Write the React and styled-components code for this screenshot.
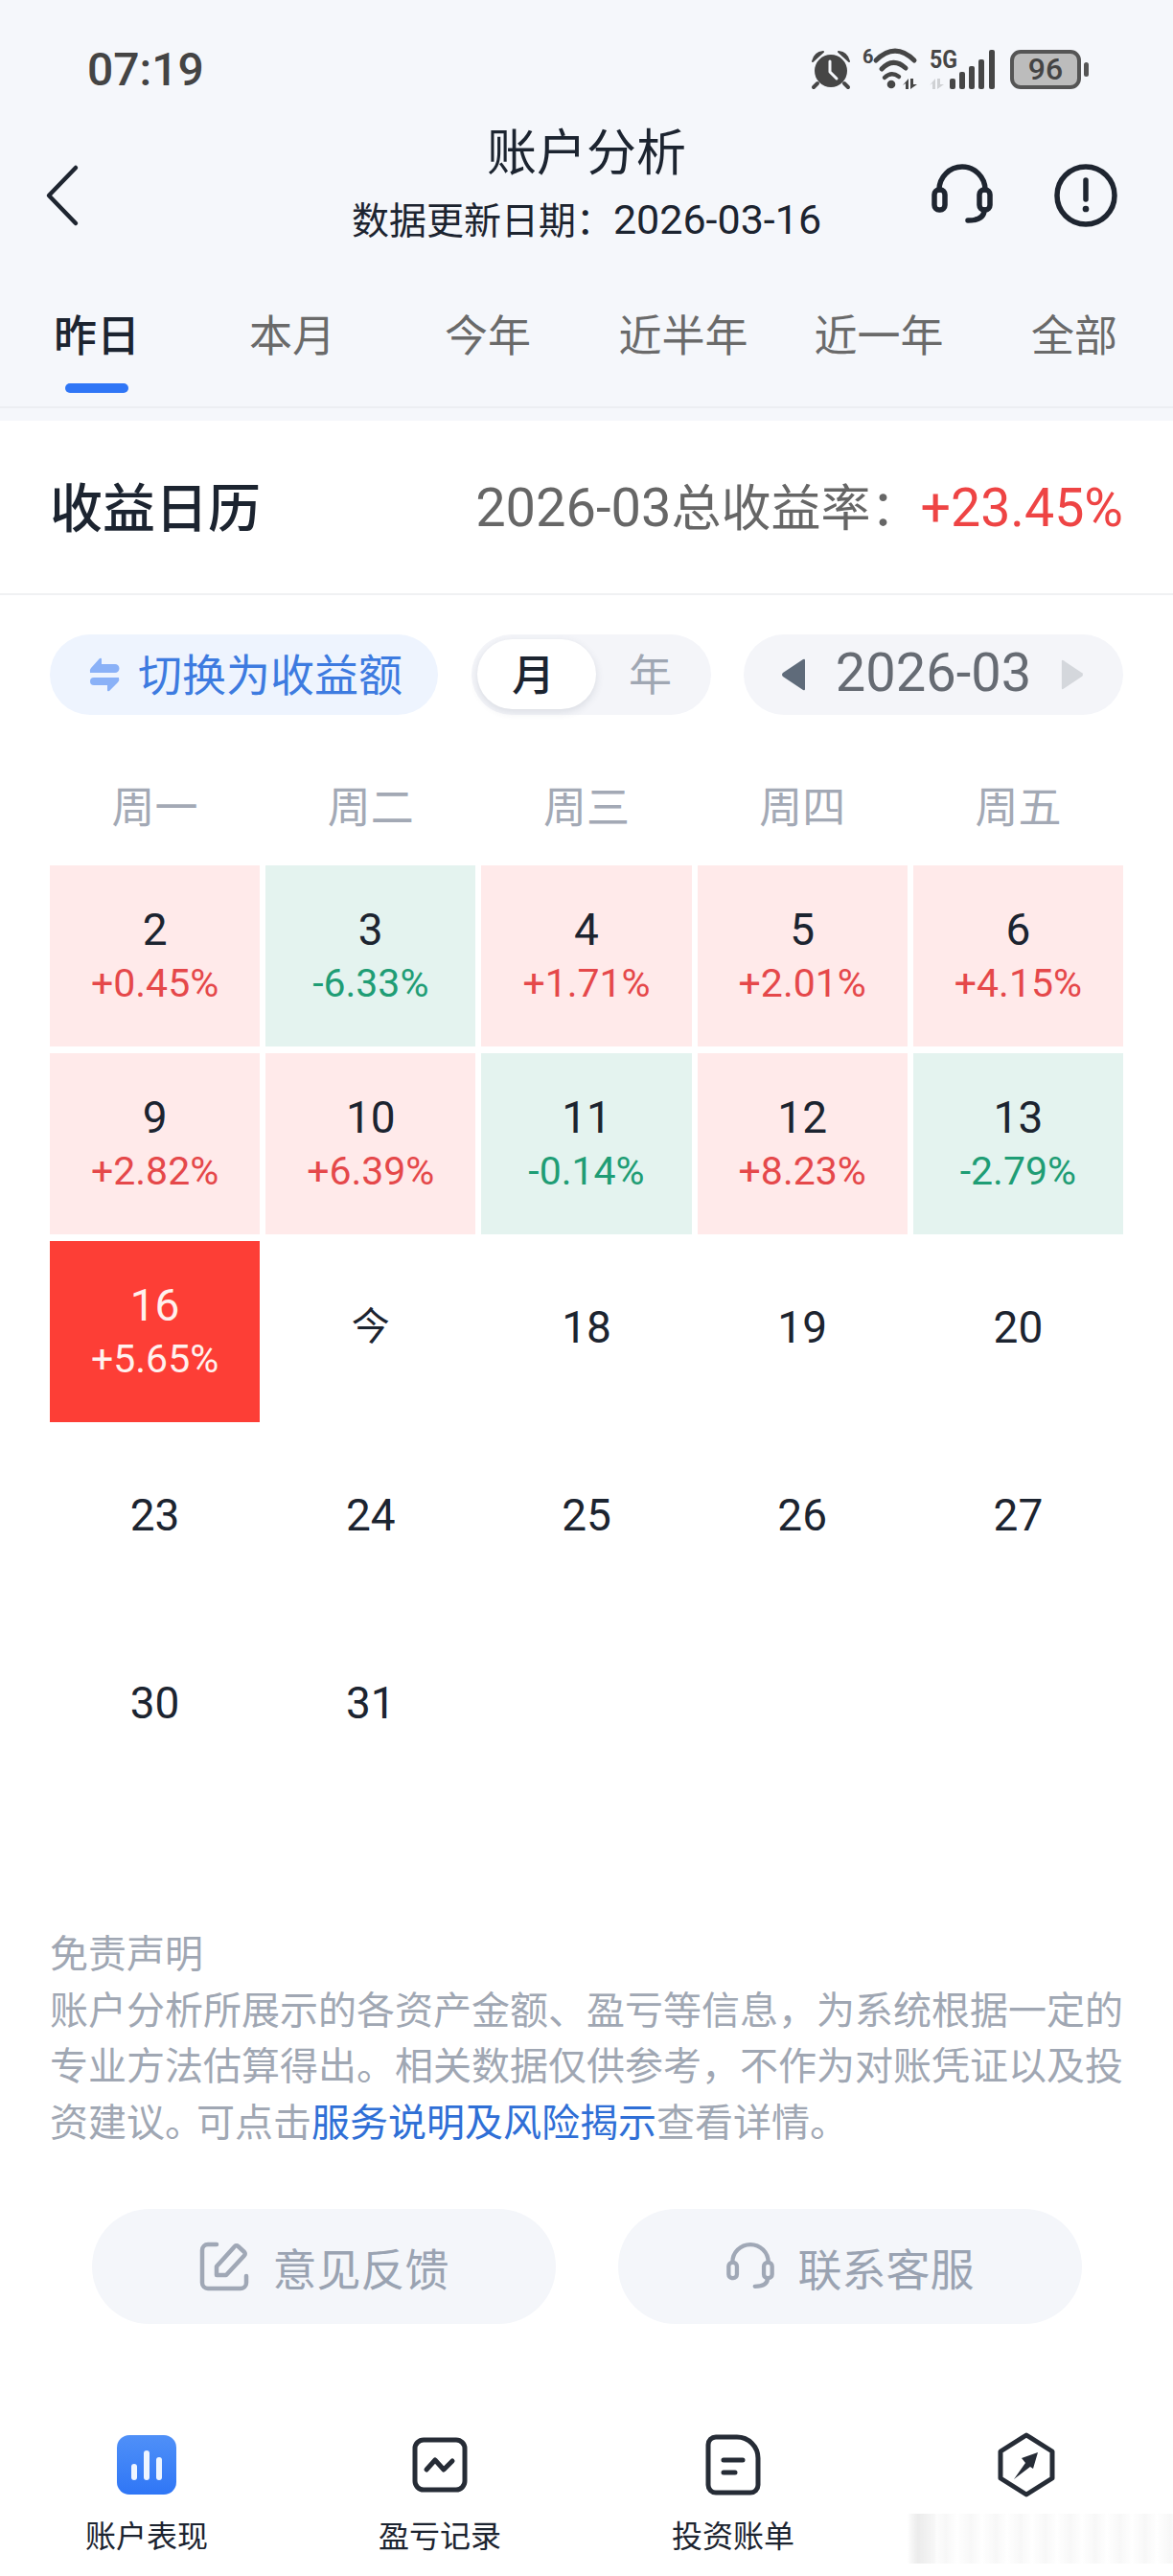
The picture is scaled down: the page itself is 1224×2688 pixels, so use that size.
import React from 'react';
import styled, { createGlobalStyle } from 'styled-components';

const GlobalStyle = createGlobalStyle`
  html, body {
    margin: 0;
    padding: 0;
    background: #fff;
  }
  body {
    font-family: Roboto, "Noto Sans CJK SC", sans-serif;
    color: #1c2430;
  }
  * {
    box-sizing: border-box;
  }
  svg {
    overflow: visible;
    flex-shrink: 0;
  }
`;

const TABS = ['昨日', '本月', '今年', '近半年', '近一年', '全部'];
const WEEKDAYS = ['周一', '周二', '周三', '周四', '周五'];

const DAYS = [
  { day: '2', pct: '+0.45%', tone: 'up' },
  { day: '3', pct: '-6.33%', tone: 'down' },
  { day: '4', pct: '+1.71%', tone: 'up' },
  { day: '5', pct: '+2.01%', tone: 'up' },
  { day: '6', pct: '+4.15%', tone: 'up' },
  { day: '9', pct: '+2.82%', tone: 'up' },
  { day: '10', pct: '+6.39%', tone: 'up' },
  { day: '11', pct: '-0.14%', tone: 'down' },
  { day: '12', pct: '+8.23%', tone: 'up' },
  { day: '13', pct: '-2.79%', tone: 'down' },
  { day: '16', pct: '+5.65%', tone: 'hot' },
  { day: '今' },
  { day: '18' },
  { day: '19' },
  { day: '20' },
  { day: '23' },
  { day: '24' },
  { day: '25' },
  { day: '26' },
  { day: '27' },
  { day: '30' },
  { day: '31' },
];

const CELL_BG = { up: '#ffeaea', down: '#e4f3ef', hot: '#fd3e36' };
const PCT_COLOR = { up: '#e5484a', down: '#1f9d75', hot: '#fff1ee' };

const HeadsetIcon = ({ size, color, stroke }) => (
  <svg width={size} height={size * 0.94} viewBox="0 0 64 60" fill="none" stroke={color} strokeWidth={stroke} strokeLinecap="round" strokeLinejoin="round">
    <path d="M8 24 a24 24 0 0 1 48 0" />
    <rect x="3" y="24" width="11" height="21" rx="5" />
    <rect x="50" y="24" width="11" height="21" rx="5" />
    <path d="M55 45 Q55 56 38 56" />
  </svg>
);

const App = () => (
  <Page>
    <GlobalStyle />
    <Header>
      <StatusBar>
        <Clock>07:19</Clock>
        <StatusIcons>
          <svg width="42" height="42" viewBox="0 0 42 42" fill="#464646">
            <circle cx="21" cy="23" r="17" />
            <path d="M2 13 Q4 4 13 3 Z M40 13 Q38 4 29 3 Z" stroke="#464646" strokeWidth="2" strokeLinejoin="round" />
            <path d="M7 36 L3 40 M35 36 L39 40" stroke="#464646" strokeWidth="4" strokeLinecap="round" />
            <path d="M20 13 V24 L27 31" fill="none" stroke="#f5f7fb" strokeWidth="3" strokeLinecap="round" strokeLinejoin="round" />
          </svg>
          <svg width="60" height="45" viewBox="0 0 60 45" fill="none">
            <text x="1" y="16" fontFamily="Roboto" fontWeight="700" fontSize="20" fill="#464646">6</text>
            <path d="M15 13 Q35 -7 55 13" stroke="#464646" strokeWidth="5" strokeLinecap="round" />
            <path d="M21 22 Q33 9 46 21" stroke="#464646" strokeWidth="5" strokeLinecap="round" />
            <path d="M24 31 Q31 24 39 30" stroke="#464646" strokeWidth="4.5" strokeLinecap="round" />
            <circle cx="31" cy="38" r="4.3" fill="#464646" />
            <path d="M49 32 V43 H46 V37 L43 39 Z M51 32 V43 L58 38 H54 V32 Z" fill="#464646" />
          </svg>
          <svg width="70" height="45" viewBox="0 0 70 45" fill="#464646">
            <text x="0" y="21" fontFamily="Roboto" fontWeight="700" fontSize="26" textLength="29" lengthAdjust="spacingAndGlyphs">5G</text>
            <path d="M6 32 V43 H3 V37 L0 39 Z M8 32 V43 L15 38 H11 V32 Z" fill="#cfd1d4" />
            <rect x="21" y="32" width="6" height="11" rx="2" />
            <rect x="31" y="25" width="6" height="18" rx="2" />
            <rect x="41" y="19" width="6" height="24" rx="2" />
            <rect x="51" y="12" width="6" height="31" rx="2" />
            <rect x="62" y="2" width="6" height="41" rx="2" />
          </svg>
          <Battery>
            <BatteryBody>96</BatteryBody>
            <BatteryNub />
          </Battery>
        </StatusIcons>
      </StatusBar>

      <NavBar>
        <BackIcon width="36" height="66" viewBox="0 0 36 66" fill="none" stroke="#1e2530" strokeWidth="4.5" strokeLinecap="round" strokeLinejoin="round">
          <path d="M32 4 L4 33 L32 62" />
        </BackIcon>
        <NavTitle>
          <TitleText>账户分析</TitleText>
          <SubText>
            数据更新日期：<SubDate>2026-03-16</SubDate>
          </SubText>
        </NavTitle>
        <NavActions>
          <HeadsetIcon size={64} color="#1e2530" stroke={5.5} />
          <svg width="66" height="66" viewBox="0 0 66 66" fill="none" stroke="#1e2530" strokeWidth="5.5" strokeLinecap="round">
            <circle cx="33" cy="33" r="30" />
            <path d="M33 17 V37" />
            <circle cx="33" cy="47" r="1.6" fill="#1e2530" strokeWidth="3.5" />
          </svg>
        </NavActions>
      </NavBar>

      <TabRow>
        {TABS.map((tab, i) => (
          <Tab key={tab}>
            <TabLabel $active={i === 0}>{tab}</TabLabel>
            {i === 0 && <TabIndicator />}
          </Tab>
        ))}
      </TabRow>
    </Header>

    <SummaryRow>
      <SummaryTitle>收益日历</SummaryTitle>
      <SummaryValue>
        <SummaryNumber>2026-03</SummaryNumber>总收益率：<SummaryRate>+23.45%</SummaryRate>
      </SummaryValue>
    </SummaryRow>

    <Controls>
      <SwitchPill>
        <svg width="32" height="36" viewBox="0 0 32 36" fill="#8ab1f7">
          <path d="M1 16 Q0 13 2 11 L11 1 Q13 0 13 2 V7 H27 a4.5 4.5 0 0 1 0 9 Z" />
          <path d="M31 21 Q32 24 30 26 L21 35 Q19 36 19 34 V29 H5 a4 4 0 0 1 0 -8 Z" />
        </svg>
        <PillText>切换为收益额</PillText>
      </SwitchPill>
      <Segment>
        <SegmentItem $active>月</SegmentItem>
        <SegmentItem>年</SegmentItem>
      </Segment>
      <DatePicker>
        <svg width="28" height="34" viewBox="0 0 28 34" fill="#5f6b7a">
          <path d="M26 2 V32 Q26 34 24 33 L3 19 Q1 17 3 15 L24 1 Q26 0 26 2 Z" />
        </svg>
        <DateText>2026-03</DateText>
        <svg width="26" height="34" viewBox="0 0 28 34" fill="#d4d7dc">
          <path d="M2 2 V32 Q2 34 4 33 L25 19 Q27 17 25 15 L4 1 Q2 0 2 2 Z" />
        </svg>
      </DatePicker>
    </Controls>

    <WeekRow>
      {WEEKDAYS.map((w) => (
        <Weekday key={w}>{w}</Weekday>
      ))}
    </WeekRow>

    <CalendarGrid>
      {DAYS.map(({ day, pct, tone }) => (
        <DayCell key={day} $tone={tone}>
          <DayNumber $tone={tone} $small={day === '今'}>{day}</DayNumber>
          {pct && <DayPct $tone={tone}>{pct}</DayPct>}
        </DayCell>
      ))}
    </CalendarGrid>

    <Disclaimer>
      <DisclaimerLine>免责声明</DisclaimerLine>
      <DisclaimerLine>账户分析所展示的各资产金额、盈亏等信息，为系统根据一定的</DisclaimerLine>
      <DisclaimerLine>专业方法估算得出。相关数据仅供参考，不作为对账凭证以及投</DisclaimerLine>
      <DisclaimerLine>
        资建议<TightStop>。</TightStop>可点击<DisclaimerLink>服务说明及风险揭示</DisclaimerLink>查看详情。
      </DisclaimerLine>
    </Disclaimer>

    <ActionRow>
      <ActionButton>
        <svg width="52" height="52" viewBox="0 0 52 52" fill="none" stroke="#a0a8b6" strokeWidth="4.5" strokeLinecap="round" strokeLinejoin="round">
          <path d="M18 3 H9 a6 6 0 0 0 -6 6 V43 a6 6 0 0 0 6 6 H43 a6 6 0 0 0 6 -6 V36" />
          <path d="M18 35 V26 L37 5 a2.5 2.5 0 0 1 3.5 0 L47 11 a2.5 2.5 0 0 1 0 3.5 L28 35 Z" />
        </svg>
        意见反馈
      </ActionButton>
      <ActionButton>
        <HeadsetIcon size={50} color="#a0a8b6" stroke={5.5} />
        联系客服
      </ActionButton>
    </ActionRow>

    <BottomNav>
      <NavItem>
        <NavIconSlot>
          <svg width="62" height="62" viewBox="0 0 62 62">
            <defs>
              <linearGradient id="tabBlue" x1="0" y1="0" x2="0" y2="1">
                <stop offset="0" stopColor="#4f90f8" />
                <stop offset="1" stopColor="#2f76f6" />
              </linearGradient>
            </defs>
            <rect width="62" height="62" rx="13" fill="url(#tabBlue)" />
            <rect x="15" y="30" width="6" height="17" rx="3" fill="#eef5ff" />
            <rect x="28" y="16" width="6" height="31" rx="3" fill="#eef5ff" />
            <rect x="41" y="23" width="6" height="24" rx="3" fill="#eef5ff" />
          </svg>
        </NavIconSlot>
        <NavLabel>账户表现</NavLabel>
      </NavItem>
      <NavItem>
        <NavIconSlot>
          <svg width="58" height="58" viewBox="0 0 58 58" fill="none" stroke="#262c36" strokeWidth="5" strokeLinecap="round" strokeLinejoin="round">
            <rect x="3" y="3" width="52" height="52" rx="9" />
            <path d="M15 34 L24 24 L33 34 L42 25" />
          </svg>
        </NavIconSlot>
        <NavLabel>盈亏记录</NavLabel>
      </NavItem>
      <NavItem>
        <NavIconSlot>
          <svg width="58" height="64" viewBox="0 0 58 64" fill="none" stroke="#262c36" strokeWidth="5" strokeLinecap="round" strokeLinejoin="round">
            <path d="M3 11 a8 8 0 0 1 8 -8 H33 a22 22 0 0 1 22 22 V53 a8 8 0 0 1 -8 8 H11 a8 8 0 0 1 -8 -8 Z" />
            <path d="M19 27 H39 M19 40 H31" />
          </svg>
        </NavIconSlot>
        <NavLabel>投资账单</NavLabel>
      </NavItem>
      <NavItem>
        <NavIconSlot>
          <svg width="62" height="68" viewBox="0 0 62 68" fill="none">
            <path d="M31 3 L58 20 V48 L31 65 L4 48 V20 Z" stroke="#262c36" strokeWidth="5" strokeLinejoin="round" />
            <path d="M43 21 L26 27 L30 32 L18 49 L35 36 L38 38 Z" fill="#262c36" />
          </svg>
        </NavIconSlot>
        <Smudge />
      </NavItem>
    </BottomNav>
  </Page>
);

const Page = styled.div`
  width: 1224px;
  height: 2688px;
  overflow: hidden;
  background: #fff;
`;

const Header = styled.header`
  background: #f5f7fb;
  padding-bottom: 13px;
`;

const StatusBar = styled.div`
  height: 124px;
  padding: 48px 88px 28px 91px;
  display: flex;
  align-items: center;
  justify-content: space-between;
`;

const Clock = styled.span`
  font-size: 48px;
  font-weight: 500;
  color: #444;
`;

const StatusIcons = styled.div`
  display: flex;
  align-items: center;
  gap: 11px;
`;

const Battery = styled.div`
  display: flex;
  align-items: center;
  gap: 3px;
  margin-left: 3px;
`;

const BatteryBody = styled.div`
  width: 74px;
  height: 41px;
  border: 4px solid #555;
  border-radius: 11px;
  background: #bcbcbc;
  color: #444;
  font-size: 32px;
  font-weight: 500;
  line-height: 33px;
  text-align: center;
`;

const BatteryNub = styled.div`
  width: 5px;
  height: 15px;
  border-radius: 3px;
  background: #555;
`;

const NavBar = styled.div`
  height: 160px;
  padding: 0 58px;
  display: grid;
  grid-template-columns: 1fr auto 1fr;
  align-items: center;
`;

const BackIcon = styled.svg`
  margin-left: -11px;
`;

const NavTitle = styled.div`
  align-self: start;
  padding-top: 3px;
  text-align: center;
`;

const TitleText = styled.div`
  font-size: 52px;
  line-height: 68px;
`;

const SubText = styled.div`
  margin-top: 9px;
  font-size: 39px;
  line-height: 50px;
  white-space: nowrap;
`;

const SubDate = styled.span`
  font-size: 43px;
`;

const NavActions = styled.div`
  display: flex;
  align-items: center;
  justify-content: flex-end;
  gap: 64px;
`;

const TabRow = styled.nav`
  height: 142px;
  margin-left: -1px;
  padding-top: 38px;
  display: grid;
  grid-template-columns: repeat(6, 204px);
  border-bottom: 2px solid #eceef2;
`;

const Tab = styled.div`
  display: flex;
  flex-direction: column;
  align-items: center;
`;

const TabLabel = styled.span`
  font-size: 45px;
  line-height: 60px;
  font-weight: ${(p) => (p.$active ? 500 : 400)};
  color: ${(p) => (p.$active ? '#1c2430' : '#6a6a6a')};
`;

const TabIndicator = styled.div`
  width: 66px;
  height: 10px;
  margin-top: 18px;
  border-radius: 5px;
  background: #2f76f6;
`;

const SummaryRow = styled.section`
  height: 182px;
  padding: 0 52px;
  display: flex;
  align-items: center;
  justify-content: space-between;
  border-bottom: 2px solid #f0f1f3;
`;

const SummaryTitle = styled.h2`
  margin: 0 0 6px;
  font-size: 55px;
  font-weight: 500;
`;

const SummaryValue = styled.div`
  margin-bottom: 5px;
  font-size: 52px;
  color: #666;
  white-space: nowrap;
`;

const SummaryNumber = styled.span`
  font-size: 56px;
`;

const SummaryRate = styled.span`
  font-size: 55.5px;
  color: #ee4444;
`;

const Controls = styled.div`
  margin: 41px 52px 0;
  display: flex;
  justify-content: space-between;
  height: 84px;
`;

const SwitchPill = styled.div`
  width: 405px;
  padding-left: 41px;
  display: flex;
  align-items: center;
  gap: 19px;
  border-radius: 42px;
  background: #eef4fe;
  color: #3d7be0;
  font-size: 46px;
`;

const PillText = styled.span`
  margin-bottom: 6px;
`;

const Segment = styled.div`
  width: 250px;
  padding: 5px 6px 6px;
  display: grid;
  grid-template-columns: 124px 1fr;
  border-radius: 42px;
  background: #f4f5f9;
`;

const SegmentItem = styled.div`
  display: flex;
  align-items: center;
  justify-content: center;
  padding-right: ${(p) => (p.$active ? 6 : 0)}px;
  padding-bottom: 5px;
  border-radius: 37px;
  font-size: 45px;
  font-weight: ${(p) => (p.$active ? 500 : 400)};
  color: ${(p) => (p.$active ? '#1c2430' : '#a0a7b3')};
  background: ${(p) => (p.$active ? '#fff' : 'transparent')};
  box-shadow: ${(p) => (p.$active ? '0 3px 8px rgba(60, 70, 90, 0.14)' : 'none')};
`;

const DatePicker = styled.div`
  width: 396px;
  padding: 0 40px 0 38px;
  display: flex;
  align-items: center;
  justify-content: space-between;
  border-radius: 42px;
  background: #f4f5f9;
`;

const DateText = styled.span`
  margin-bottom: 5px;
  font-size: 56px;
  color: #666b73;
`;

const WeekRow = styled.div`
  margin: 68px 52px 0;
  display: grid;
  grid-template-columns: repeat(5, 1fr);
  column-gap: 6px;
`;

const Weekday = styled.div`
  font-size: 45px;
  line-height: 60px;
  text-align: center;
  color: #a3a9b5;
`;

const CalendarGrid = styled.div`
  margin: 29px 52px 0;
  display: grid;
  grid-template-columns: repeat(5, 1fr);
  grid-auto-rows: 189px;
  gap: 7px 6px;
  height: 973px;
`;

const DayCell = styled.div`
  display: flex;
  flex-direction: column;
  align-items: center;
  justify-content: center;
  padding-bottom: ${(p) => (p.$tone ? 0 : 9)}px;
  background: ${(p) => CELL_BG[p.$tone] || 'transparent'};
`;

const DayNumber = styled.span`
  font-size: ${(p) => (p.$small ? 40 : 46)}px;
  line-height: 56px;
  color: ${(p) => (p.$tone === 'hot' ? '#fff1ee' : '#1c2430')};
`;

const DayPct = styled.span`
  font-size: 41px;
  line-height: 56px;
  color: ${(p) => PCT_COLOR[p.$tone]};
`;

const Disclaimer = styled.div`
  margin: 135px 52px 0;
  font-size: 40px;
  line-height: 58.5px;
  color: #a0a7b3;
`;

const DisclaimerLine = styled.div`
  white-space: nowrap;
`;

const TightStop = styled.span`
  letter-spacing: -7px;
`;

const DisclaimerLink = styled.span`
  color: #2f6fd6;
`;

const ActionRow = styled.div`
  margin: 60px 95px 0 96px;
  display: flex;
  justify-content: space-between;
`;

const ActionButton = styled.div`
  width: 484px;
  height: 120px;
  display: flex;
  align-items: center;
  justify-content: center;
  gap: 25px;
  border-radius: 60px;
  background: #f4f6fa;
  color: #9aa3b2;
  font-size: 46px;
`;

const BottomNav = styled.nav`
  margin-top: 113px;
  display: grid;
  grid-template-columns: repeat(4, 306px);
`;

const NavItem = styled.div`
  display: flex;
  flex-direction: column;
  align-items: center;
`;

const NavIconSlot = styled.div`
  height: 68px;
  display: flex;
  align-items: center;
`;

const NavLabel = styled.span`
  margin-top: 18px;
  font-size: 32px;
  line-height: 46px;
`;

const Smudge = styled.div`
  align-self: flex-end;
  width: 277px;
  height: 52px;
  margin-top: 17px;
  background:
    linear-gradient(90deg, transparent 0, #e4e4e4 4%, #f3f3f3 10%, transparent 11%),
    repeating-linear-gradient(90deg, #fff 0, #f5f5f5 14px, #fff 26px);
  opacity: 0.7;
`;

export default App;
